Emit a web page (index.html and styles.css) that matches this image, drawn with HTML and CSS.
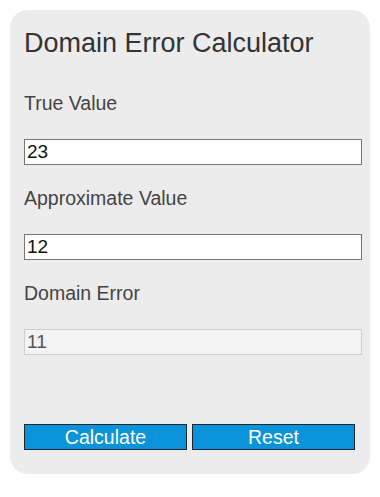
FILE: index.html
```html
<!DOCTYPE html>
<html>
	<head>
		<meta charset="utf-8">
		<title>Domain Error Calculator</title>
		<link rel="stylesheet" href="styles.css">
	</head>
	<body>
		<div class="calc">
			<h1 class="title">Domain Error Calculator</h1>
			<div class="row">
				<label class="label" for="tv">True Value</label>
				<input class="field" id="tv" type="text" value="23" />
			</div>
			<div class="row">
				<label class="label" for="av">Approximate Value</label>
				<input class="field" id="av" type="text" value="12" />
			</div>
			<div class="row">
				<label class="label" for="de">Domain Error</label>
				<input class="field result" id="de" type="text" value="11" readonly />
			</div>
			<div class="buttons">
				<button class="btn">Calculate</button>
				<button class="btn">Reset</button>
			</div>
		</div>
	</body>
</html>
```

FILE: styles.css
```css
* {
	margin: 0;
	padding: 0;
	box-sizing: border-box;
}

body {
	font-family: "Liberation Sans", Arial, sans-serif;
	background-color: #FFFFFF;
}

.calc {
	width: 360px;
	height: 464px;
	margin: 10px;
	padding: 17px 14px 24px;
	background-color: #ECECEC;
	border-radius: 18px;
	display: flex;
	flex-direction: column;
}

.title {
	font-size: 27px;
	font-weight: normal;
	line-height: 32px;
	color: #333333;
	margin-bottom: 32px;
}

.row {
	display: flex;
	flex-direction: column;
	gap: 24px;
	margin-bottom: 21px;
}

.label {
	font-size: 19.5px;
	line-height: 24px;
	color: #444444;
}

.field {
	width: 338px;
	height: 26px;
	padding: 0 2px;
	font-family: "Liberation Sans", Arial, sans-serif;
	font-size: 19px;
	color: #111111;
	background-color: #FFFFFF;
	border: 1px solid #767676;
	outline: none;
}

.field.result {
	background-color: #F3F3F3;
	border-color: #CFCFCF;
	color: #555555;
}

.buttons {
	display: flex;
	gap: 5px;
	margin-top: auto;
}

.btn {
	width: 163px;
	height: 26px;
	font-family: "Liberation Sans", Arial, sans-serif;
	font-size: 19.5px;
	line-height: 24px;
	color: #FFFFFF;
	background-color: #0A93D8;
	border: 1px solid #1C2A33;
	cursor: pointer;
}
```
